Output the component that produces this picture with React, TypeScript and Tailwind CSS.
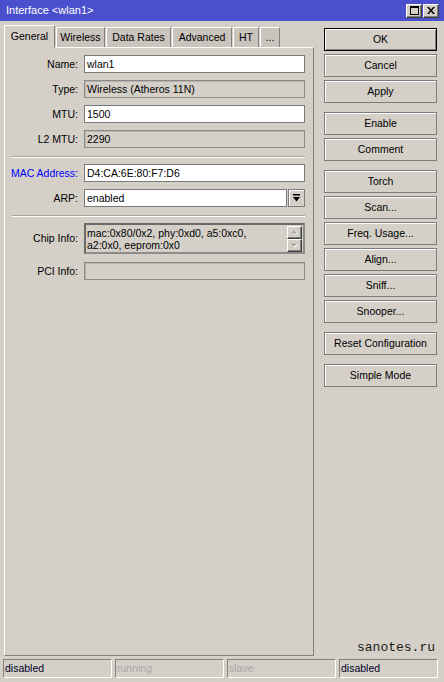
import React from "react";

const FACE = "bg-[#d4d0c8]";

function TitleButton({ kind }: { kind: "max" | "close" }) {
  return (
    <div className="w-[16px] h-[14px] bg-[#d4d0c8] border border-t-white border-l-white border-r-[#404040] border-b-[#404040] shadow-[inset_-1px_-1px_0_#808080] flex items-center justify-center">
      {kind === "max" ? (
        <svg width="9" height="9" viewBox="0 0 9 9">
          <rect x="0.5" y="0.5" width="8" height="8" fill="none" stroke="#000" />
          <rect x="0" y="0" width="9" height="2" fill="#000" />
        </svg>
      ) : (
        <svg width="8" height="7" viewBox="0 0 8 7">
          <path d="M0 0h2l2 2.5L6 0h2L5 3.5 8 7H6L4 4.5 2 7H0l3-3.5z" fill="#000" />
        </svg>
      )}
    </div>
  );
}

function Tab({ label, w, active }: { label: string; w: string; active?: boolean }) {
  if (active) {
    return (
      <div
        className={`${w} h-[23px] -mb-px relative z-10 ${FACE} border-l border-t border-r border-l-white border-t-white border-r-[#808080] flex items-center justify-center pb-[2px] text-black`}
      >
        {label}
      </div>
    );
  }
  return (
    <div
      className={`${w} h-[20px] bg-[#c9c5bd] border-l border-t border-r border-l-white border-t-white border-r-[#808080] flex items-center justify-center text-black`}
    >
      {label}
    </div>
  );
}

function Label({ text, blue }: { text: string; blue?: boolean }) {
  return (
    <div className={`w-[74px] pr-[1px] text-right ${blue ? "text-[#0000ff]" : "text-black"}`}>{text}</div>
  );
}

function Field({ label, value, disabled, blue }: { label: string; value: string; disabled?: boolean; blue?: boolean }) {
  return (
    <div className="flex items-center gap-[5px] h-[18px]">
      <Label text={label} blue={blue} />
      <div
        className={`w-[221px] h-[18px] border ${
          disabled ? "border-[#8a8a8a] bg-[#d4d0c8] shadow-[inset_1px_1px_0_#b8b4ac]" : "border-[#7a7a7a] bg-white"
        } flex items-center px-[2px] text-black`}
      >
        {value}
      </div>
    </div>
  );
}

function Separator() {
  return <div className="ml-[7px] mr-[8px] h-[2px] border-t border-t-[#a8a49c] border-b border-b-white" />;
}

function ScrollArrow({ up }: { up?: boolean }) {
  return (
    <div className="w-[15px] h-[14px] bg-[#d4d0c8] border border-t-white border-l-white border-r-[#404040] border-b-[#404040] shadow-[inset_-1px_-1px_0_#808080] flex items-center justify-center">
      <svg width="7" height="5" viewBox="0 0 7 5">
        {up ? (
          <>
            <path d="M1 4h6L4 1z" fill="#fff" />
            <path d="M0 3.5h6L3 0.5z" fill="#a0a0a0" />
          </>
        ) : (
          <>
            <path d="M1 1.5h6L4 4.5z" fill="#fff" />
            <path d="M0 0.5h6L3 3.5z" fill="#a0a0a0" />
          </>
        )}
      </svg>
    </div>
  );
}

function Btn({ label, primary }: { label: string; primary?: boolean }) {
  return (
    <div
      className={`h-[23px] ${FACE} border ${
        primary ? "border-black shadow-[inset_1px_1px_0_#fff,inset_-1px_-1px_0_#808080]" : "border-[#7c7c7c] shadow-[inset_1px_1px_0_#fff]"
      } flex items-center justify-center text-black`}
    >
      {label}
    </div>
  );
}

function Group({ items, first }: { items: { label: string; primary?: boolean }[]; first?: boolean }) {
  return (
    <div className={`flex flex-col gap-[3px] ${first ? "" : "mt-[9px]"}`}>
      {items.map((b) => (
        <Btn key={b.label} label={b.label} primary={b.primary} />
      ))}
    </div>
  );
}

function StatusCell({ text, dim, w }: { text: string; dim?: boolean; w: string }) {
  return (
    <div
      className={`${w} h-[19px] border border-t-[#808080] border-l-[#808080] border-r-white border-b-white flex items-center pl-[1px] ${
        dim ? "text-[#a8a8a8]" : "text-[#000028]"
      }`}
    >
      {text}
    </div>
  );
}

export default function App() {
  return (
    <div className="w-[444px] h-[682px] bg-[#d4d0c8] flex flex-col font-['Liberation_Sans',Arial,sans-serif] text-[10.5px] leading-none overflow-hidden">
      {/* title bar */}
      <div className="h-[21px] bg-[#4a4fcd] flex items-center pl-[6px] pr-[5px] text-white text-[11px]">
        <span className="flex-1">Interface &lt;wlan1&gt;</span>
        <div className="flex gap-[1px] items-center">
          <TitleButton kind="max" />
          <TitleButton kind="close" />
        </div>
      </div>

      {/* body */}
      <div className="flex flex-1 min-h-0 pl-[4px] pr-[7px] pt-[4px]">
        <div className="w-[310px] flex flex-col">
          <div className="h-[22px] flex items-end gap-[1px]">
            <Tab label="General" w="w-[51px]" active />
            <Tab label="Wireless" w="w-[49px]" />
            <Tab label="Data Rates" w="w-[65px]" />
            <Tab label="Advanced" w="w-[60px]" />
            <Tab label="HT" w="w-[26px]" />
            <Tab label="..." w="w-[20px]" />
          </div>
          <div className="flex-1 border border-l-white border-t-white border-r-[#808080] border-b-[#808080] pt-[7px] flex flex-col">
            <Field label="Name:" value="wlan1" />
            <div className="mt-[7px]">
              <Field label="Type:" value="Wireless (Atheros 11N)" disabled />
            </div>
            <div className="mt-[7px]">
              <Field label="MTU:" value="1500" />
            </div>
            <div className="mt-[7px]">
              <Field label="L2 MTU:" value="2290" disabled />
            </div>
            <div className="mt-[8px]">
              <Separator />
            </div>
            <div className="mt-[6px]">
              <Field label="MAC Address:" value="D4:CA:6E:80:F7:D6" blue />
            </div>
            <div className="mt-[7px] flex items-center gap-[5px] h-[18px]">
              <Label text="ARP:" />
              <div className="w-[203px] h-[18px] border border-[#7a7a7a] bg-white flex items-center px-[2px] text-black">
                enabled
              </div>
              <div className="-ml-[4px] w-[17px] h-[18px] bg-[#d4d0c8] border border-[#7c7c7c] shadow-[inset_1px_1px_0_#fff] flex items-center justify-center">
                <svg width="7" height="8" viewBox="0 0 7 8">
                  <rect x="0" y="0" width="7" height="1.5" fill="#000" />
                  <path d="M0 3h7L3.5 7.5z" fill="#000" />
                </svg>
              </div>
            </div>
            <div className="mt-[8px]">
              <Separator />
            </div>
            <div className="mt-[6px] flex items-center gap-[5px] h-[31px]">
              <Label text="Chip Info:" />
              <div className="w-[221px] h-[31px] border-2 border-t-[#6a6a6a] border-l-[#6a6a6a] border-r-[#8c8c8c] border-b-[#8c8c8c] bg-[#d4d0c8] flex">
                <div className="flex-1 pl-[1px] pt-[2px] text-black leading-[12px]">
                  mac:0x80/0x2, phy:0xd0, a5:0xc0,
                  <br />
                  a2:0x0, eeprom:0x0
                </div>
                <div className="flex flex-col pt-[1px] pr-[1px]">
                  <ScrollArrow up />
                  <ScrollArrow />
                </div>
              </div>
            </div>
            <div className="mt-[8px]">
              <Field label="PCI Info:" value="" disabled />
            </div>
          </div>
        </div>

        {/* action buttons */}
        <div className="ml-[10px] w-[113px] flex flex-col pt-[3px]">
          <Group first items={[{ label: "OK", primary: true }, { label: "Cancel" }, { label: "Apply" }]} />
          <Group items={[{ label: "Enable" }, { label: "Comment" }]} />
          <Group
            items={[
              { label: "Torch" },
              { label: "Scan..." },
              { label: "Freq. Usage..." },
              { label: "Align..." },
              { label: "Sniff..." },
              { label: "Snooper..." },
            ]}
          />
          <Group items={[{ label: "Reset Configuration" }]} />
          <Group items={[{ label: "Simple Mode" }]} />
          <div className="flex-1" />
          <div className="text-right pr-[2px] mb-[1px] font-['Liberation_Mono','Courier_New',monospace] text-[13px] leading-[15px] text-[#1a1a1a]">
            sanotes.ru
          </div>
        </div>
      </div>

      {/* status bar */}
      <div className="mt-[3px] mb-[4px] pl-[3px] flex gap-[3px]">
        <StatusCell text="disabled" w="w-[109px]" />
        <StatusCell text="running" dim w="w-[109px]" />
        <StatusCell text="slave" dim w="w-[109px]" />
        <StatusCell text="disabled" w="w-[99px]" />
      </div>
    </div>
  );
}
